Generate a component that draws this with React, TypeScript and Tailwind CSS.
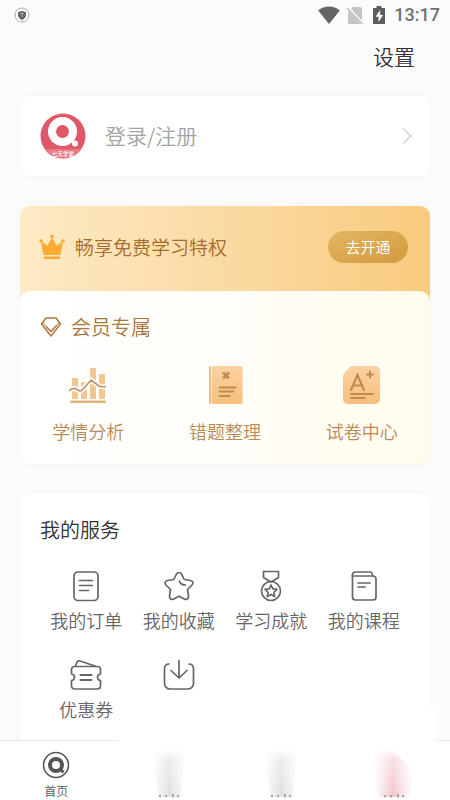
import React from 'react';

interface Item {
  label: string;
  icon: React.ReactNode;
}

const LogoBadge = () => (
  <svg viewBox="0 0 46 46" className="size-[46px] shrink-0" role="img" aria-label="七天学堂">
    <defs>
      <clipPath id="badge">
        <circle cx="23" cy="23" r="22.5" />
      </clipPath>
    </defs>
    <g clipPath="url(#badge)">
      <rect width="46" height="46" fill="#de5867" />
      <rect y="36" width="46" height="10" fill="#ea7883" />
    </g>
    <circle cx="22.5" cy="18.5" r="10.5" fill="none" stroke="#fff" strokeWidth="8" />
    <circle cx="35" cy="30.5" r="3" fill="#fff" />
    <text x="23" y="42.500" fontSize="5.500" fontWeight="500" textAnchor="middle" fill="#fff">七天学堂</text>
  </svg>
);

const CrownIcon = () => (
  <svg viewBox="0 0 26 26" className="size-[26px]" fill="#fbaa33">
    <path d="M2 7.500 8.500 11.500 13 3.500 17.500 11.500 24 7.500 21.500 21H4.500z" />
    <circle cx="13" cy="2.500" r="1.800" />
    <circle cx="2" cy="7" r="1.800" />
    <circle cx="24" cy="7" r="1.800" />
    <rect x="4.500" y="22.500" width="17" height="2.500" rx="1" />
  </svg>
);

const DiamondIcon = () => (
  <svg viewBox="0 0 22 22" className="size-[22px]" fill="none" stroke="#ae7c3f" strokeWidth="1.600" strokeLinejoin="round" strokeLinecap="round">
    <path d="M6 2h10l4.500 6L11 20 1.500 8z" />
    <path d="m6.500 11 4.500 4.500 5-5.500" />
    <path d="m3 6.500 3 4M19 6.500l-3 4" strokeWidth="1" />
  </svg>
);

const ChartIcon = () => (
  <svg viewBox="0 0 40 40" className="size-10">
    <g fill="#f3c68f">
      <rect x="4" y="13" width="6" height="21" rx="1" />
      <rect x="13" y="17" width="6" height="17" rx="1" />
      <rect x="22" y="3" width="6" height="31" rx="1" />
      <rect x="31" y="9" width="6" height="25" rx="1" />
      <rect x="2" y="35.500" width="36" height="2.500" rx="1" fill="#e2b27c" />
    </g>
    <path d="M1 26c3-3 6-3 8-1.500 3 2 4 2 6-.5l8-9 8 6c2 1 4 1 7 .5" fill="none" stroke="#fffefb" strokeWidth="5" />
    <path d="M1 26c3-3 6-3 8-1.500 3 2 4 2 6-.5l8-9 8 6c2 1 4 1 7 .5" fill="none" stroke="#bd9268" strokeWidth="1.600" />
  </svg>
);

const MistakeIcon = () => (
  <svg viewBox="0 0 40 40" className="size-10">
    <defs>
      <linearGradient id="gold" x1="0" y1="0" x2="0" y2="1">
        <stop offset="0" stopColor="#f9d2a2" />
        <stop offset="1" stopColor="#f7bf7c" />
      </linearGradient>
    </defs>
    <rect x="4" y="1" width="2" height="38" rx="1" fill="#f0bd82" />
    <rect x="6.500" y="1" width="31" height="38" rx="2" fill="url(#gold)" />
    <g stroke="#c18b50" fill="none" strokeLinecap="round">
      <path d="m18 7.500 6 6m0-6-6 6" strokeWidth="2.600" strokeLinecap="butt" />
      <path d="M14.500 22.500h16M14.500 26.500h14M14.500 31h10" strokeWidth="1.800" />
    </g>
  </svg>
);

const PaperIcon = () => (
  <svg viewBox="0 0 40 40" className="size-10">
    <path d="M11 1h22a5 5 0 0 1 5 5v28a5 5 0 0 1-5 5H6a5 5 0 0 1-5-5V12c0-2 .5-3 2-4.500L7 3c1-1.500 2-2 4-2z" fill="url(#gold)" />
    <g stroke="#c18b50" fill="none" strokeLinecap="round">
      <path d="m9 25 6.500-15L22 25M11 20.500h9" strokeWidth="2.200" />
      <path d="M28 6.500v6M25 9.500h6" strokeWidth="2" />
      <path d="M9 29h22M9 33h14" strokeWidth="1.800" />
    </g>
  </svg>
);

const LineIcon = ({ children }: { children: React.ReactNode }) => (
  <svg viewBox="0 0 32 32" className="size-8" fill="none" stroke="#666" strokeWidth="1.700" strokeLinecap="round" strokeLinejoin="round">
    {children}
  </svg>
);

const perks: Item[] = [
  { label: '学情分析', icon: <ChartIcon /> },
  { label: '错题整理', icon: <MistakeIcon /> },
  { label: '试卷中心', icon: <PaperIcon /> },
];

const services: Item[] = [
  {
    label: '我的订单',
    icon: (
      <LineIcon>
        <rect x="4" y="2" width="24" height="28.500" rx="4" />
        <path d="M9.500 10.500h13M9.500 15.500h13M9.500 20.500h9" />
      </LineIcon>
    ),
  },
  {
    label: '我的收藏',
    icon: (
      <LineIcon>
        <path d="M13.500 4c1-2 4-2 5 0l2.700 5.500 6.300 1c2.500.4 3.200 2.800 1.500 4.500l-4.500 4.500 1 6.500c.3 2.800-2 4.200-4.300 3L16 26.200 10.800 29c-2.300 1.200-4.600-.2-4.300-3l1-6.500L3 15c-1.700-1.700-1-4.100 1.500-4.500l6.300-1z" />
        <path d="M16.500 11c.5 2.500 2.500 4 6 4" />
      </LineIcon>
    ),
  },
  {
    label: '学习成就',
    icon: (
      <LineIcon>
        <path d="M8.500 1.500h15v6L16 12 8.500 7.500z" />
        <circle cx="16" cy="21" r="9.500" />
        <path d="m16 15 1.800 3.900 4.200.5-3.100 2.900.8 4.200-3.700-2.100-3.700 2.100.8-4.200-3.100-2.900 4.200-.5z" />
      </LineIcon>
    ),
  },
  {
    label: '我的课程',
    icon: (
      <LineIcon>
        <path d="M4.500 5v22a3 3 0 0 0 3 3H25a3 3 0 0 0 3-3V9a3 3 0 0 0-3-3H6.500" />
        <path d="M4.500 6.500C4 3.500 5.500 2 7.500 2H22c1.500 0 2.500 1.500 2.500 4M10 13h12M10 17h7" />
      </LineIcon>
    ),
  },
  {
    label: '优惠券',
    icon: (
      <LineIcon>
        <path d="M4.500 7.500h23a3 3 0 0 1 3 3V15c-4 .5-4 6 0 6.500V27a3 3 0 0 1-3 3h-23a3 3 0 0 1-3-3v-5.500c4-.5 4-6 0-6.500v-4.500a3 3 0 0 1 3-3z" />
        <path d="m5.500 7 1.500-4c.5-1 1.500-1.500 3-1L25 7" />
        <path d="M10.500 16h11M10.500 21h11" strokeWidth="2" />
      </LineIcon>
    ),
  },
  {
    label: '',
    icon: (
      <LineIcon>
        <path d="M6 5C3 5 1.500 6.500 1.500 10v14.500A5.500 5.500 0 0 0 7 30h18a5.500 5.500 0 0 0 5.500-5.500V10c0-3.500-1.500-5-4.500-5" />
        <path d="M16 1.500V19M8 11.500l8 7.500 8-7.500" />
      </LineIcon>
    ),
  },
];

const StatusBar = () => (
  <div className="flex h-[30px] shrink-0 items-center justify-between pl-[14px] pr-[10px]">
    <svg viewBox="0 0 16 16" className="size-4">
      <circle cx="8" cy="8" r="7" fill="#fff" stroke="#aaa" />
      <path d="M8 4 12 5v3c0 2.500-2 4-4 5-2-1-4-2.500-4-5V5z" fill="#666" />
      <path d="M6 6.500h4M8 6.500V10" stroke="#aaa" />
    </svg>
    <div className="flex items-center gap-[6px]">
      <svg viewBox="0 0 22 18" className="h-[18px] w-[22px]" fill="#656565">
        <path d="M11 18 .2 4.500C6-.8 16-.8 21.800 4.500z" />
      </svg>
      <svg viewBox="0 0 18 18" className="size-[18px]">
        <path d="M7 1h7a2 2 0 0 1 2 2v15H2V6z" fill="#c4c4c4" />
        <path d="m1 1 16 17" stroke="#fbfbfb" strokeWidth="3" />
        <path d="m1 2 15.500 16" stroke="#b5b5b5" strokeWidth="1.200" />
      </svg>
      <svg viewBox="0 0 18 18" className="size-[18px]">
        <path d="M6.500 0h5v2H15v16H3V2h3.500z" fill="#5d5d5d" />
        <path d="M10.200 4 5.500 10.800h3V16l4.700-7h-3z" fill="#fbfbfb" />
      </svg>
      <span className="font-['Roboto'] text-[18px] font-medium leading-6 text-[#707070]">13:17</span>
    </div>
  </div>
);

// Tab that is hidden behind the fade
const FadedTab = ({ tone, label }: { tone: 'gray' | 'pink'; label: string }) => (
  <a href="#" aria-label={label} className="flex flex-1 justify-center">
    <svg viewBox="0 0 48 52" className="mt-2 h-[52px] w-12">
      <defs>
        <linearGradient id={`fade-${tone}`} x1="0" x2="1" y1="0" y2="0">
          <stop offset="0" stopColor={tone === 'pink' ? '#f7d5d8' : '#ddd'} stopOpacity="0" />
          <stop offset=".5" stopColor={tone === 'pink' ? '#f1c4c9' : '#dfdfdf'} />
          <stop offset="1" stopColor={tone === 'pink' ? '#f7d5d8' : '#ddd'} stopOpacity="0" />
        </linearGradient>
        <linearGradient id="veil" x1="0" x2="0" y1="0" y2="1">
          <stop offset="0" stopColor="#fff" stopOpacity=".6" />
          <stop offset="1" stopColor="#fff" stopOpacity="0" />
        </linearGradient>
      </defs>
      {tone === 'pink' ? (
        <path d="M2 0h20l22 23-4 25H8z" fill="url(#fade-pink)" />
      ) : (
        <path d="M7 0h34l-5 48H13z" fill="url(#fade-gray)" />
      )}
      <rect width="48" height="48" fill="url(#veil)" />
      <path d="M15 46v2.500M21 46v2.500M28 45v3.500M33 46v2.500" stroke={tone === 'pink' ? '#a98a8d' : '#999'} strokeWidth="1.500" />
    </svg>
  </a>
);

const App: React.FC = () => {
  return (
    <div className="flex h-screen flex-col overflow-hidden bg-[#fbfbfb] font-['Noto_Sans_CJK_SC',sans-serif] font-[350] text-[#333]">
      <StatusBar />

      <main className="flex-1 overflow-hidden px-5">
        {/* Header */}
        <header className="flex h-[66px] justify-end pr-[15px] pt-[10px]">
          <button type="button" className="h-8 text-[21px] leading-8">设置</button>
        </header>

        {/* Login */}
        <a href="#" className="flex h-20 items-center rounded-[10px] bg-white px-5 shadow-[0_0_12px_rgba(0,0,0,0.02)]">
          <LogoBadge />
          <span className="ml-[19px] flex-1 pb-[2px] text-[21px] leading-8 text-[#a3a3a3]">登录/注册</span>
          <svg viewBox="0 0 10 18" className="mr-[-2px] h-[18px] w-[10px]" fill="none" stroke="#ccc" strokeWidth="1.300">
            <path d="m1 1.500 8 7.500-8 7.500" />
          </svg>
        </a>

        {/* Membership */}
        <section className="mt-[30px] rounded-[10px] bg-linear-to-r from-[#fdeac6] to-[#f8ca7e] shadow-[0_0_12px_rgba(0,0,0,0.02)]">
          <div className="flex h-[85px] items-center pb-[3px] pl-[19px] pr-[22px]">
            <CrownIcon />
            <h2 className="ml-[10px] flex-1 text-[19px] leading-8 text-[#a56d2b]">畅享免费学习特权</h2>
            <button type="button" className="h-8 w-20 rounded-full bg-linear-to-br from-[#e2b663] to-[#d19b3c] text-[15px] leading-8 text-white">
              去开通
            </button>
          </div>
          <div className="h-[173px] rounded-[10px] bg-linear-to-r from-white via-[#fffdf8] to-[#fffbec] pt-5">
            <div className="flex items-center pl-5">
              <DiamondIcon />
              <h3 className="ml-[9px] text-[20px] leading-8 text-[#a9763c]">会员专属</h3>
            </div>
            <div className="mt-[22px] grid grid-cols-3">
              {perks.map(perk => (
                <a key={perk.label} href="#" className="flex flex-col items-center">
                  {perk.icon}
                  <span className="mt-[10px] text-[18px] leading-8 text-[#b98a58]">{perk.label}</span>
                </a>
              ))}
            </div>
          </div>
        </section>

        {/* Services */}
        <section className="mt-[30px] h-80 rounded-[10px] bg-white px-5 pt-5 shadow-[0_0_12px_rgba(0,0,0,0.02)]">
          <h2 className="text-[20px] leading-8">我的服务</h2>
          <div className="mt-6 grid grid-cols-4 gap-y-[6px]">
            {services.map((service, i) => (
              <a key={i} href="#" aria-label={service.label || '下载'} className="flex h-[83px] flex-col items-center">
                {service.icon}
                <span className="mt-[2px] text-[18px] leading-8 text-[#666]">{service.label}</span>
              </a>
            ))}
          </div>
        </section>
      </main>

      {/* Tab bar */}
      <nav className="relative flex h-[60px] shrink-0 border-t border-[#e8e8e8] bg-white">
        <div className="absolute -top-9 left-[26%] right-[3%] h-12 bg-white blur-[3px]" />
        <a href="#" className="flex flex-1 flex-col items-center pt-[10px]">
          <svg viewBox="0 0 28 28" className="size-7" fill="none" stroke="#555">
            <circle cx="14" cy="14" r="12.500" strokeWidth="1.500" />
            <circle cx="14" cy="14" r="6" strokeWidth="4" />
            <path d="m18.500 18.500 3 3" strokeWidth="3" />
          </svg>
          <span className="mt-1 text-[12px] leading-4 text-[#555]">首页</span>
        </a>
        <FadedTab tone="gray" label="学习" />
        <FadedTab tone="gray" label="消息" />
        <FadedTab tone="pink" label="我的" />
      </nav>
    </div>
  );
};

export default App;
